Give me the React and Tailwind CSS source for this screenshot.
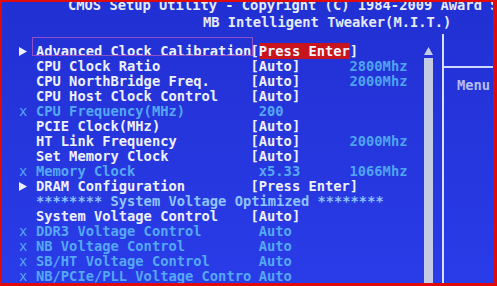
import React from "react";

const rows = [
  { mark: "arrow", label: "Advanced Clock Calibration", value: "enter", selected: true },
  { label: "CPU Clock Ratio", value: "[Auto]", extra: "2800Mhz" },
  { label: "CPU NorthBridge Freq.", value: "[Auto]", extra: "2000Mhz" },
  { label: "CPU Host Clock Control", value: "[Auto]" },
  { mark: "x", label: "CPU Frequency(MHz)", value: " 200", dim: true },
  { label: "PCIE Clock(MHz)", value: "[Auto]" },
  { label: "HT Link Frequency", value: "[Auto]", extra: "2000Mhz" },
  { label: "Set Memory Clock", value: "[Auto]" },
  { mark: "x", label: "Memory Clock", value: " x5.33", extra: "1066Mhz", dim: true },
  { mark: "arrow", label: "DRAM Configuration", value: "[Press Enter]" },
  { banner: "******** System Voltage Optimized ********" },
  { label: "System Voltage Control", value: "[Auto]" },
  { mark: "x", label: "DDR3 Voltage Control", value: " Auto", dim: true },
  { mark: "x", label: "NB Voltage Control", value: " Auto", dim: true },
  { mark: "x", label: "SB/HT Voltage Control", value: " Auto", dim: true },
  { mark: "x", label: "NB/PCIe/PLL Voltage Contro", value: " Auto", dim: true },
];

const Arrow = () => (
  <svg width="8" height="9" viewBox="0 0 8 9" className="mt-[3px]">
    <polygon points="0,0 8,4.5 0,9" fill="#eef0ff" />
  </svg>
);

const Row = ({ row }) => {
  if (row.banner) {
    return (
      <div className="flex h-[15px]">
        <span className="w-[17px]" />
        <span className="whitespace-pre text-[#8ec4ff]">{row.banner}</span>
      </div>
    );
  }
  const tone = row.dim ? "text-[#55a8f5]" : "text-[#eef0ff]";
  return (
    <div className="relative flex h-[15px]">
      {row.selected && (
        <div className="absolute left-[13px] top-[-7px] h-[19px] w-[221px] border border-[#9050c8]" />
      )}
      <span className="flex w-[17px] justify-start">
        {row.mark === "arrow" && <Arrow />}
        {row.mark === "x" && <span className="text-[#55a8f5] font-normal">x</span>}
      </span>
      <span className={`w-[214.5px] shrink-0 overflow-hidden whitespace-pre ${tone}`}>{row.label}</span>
      <span className={`w-[99px] shrink-0 whitespace-pre ${row.dim ? "text-[#55a8f5]" : "text-[#eef0ff]"}`}>
        {row.value === "enter" ? (
          <>
            [<span className="bg-[#c8141c] text-[#f4f4ff]">Press Enter</span>]
          </>
        ) : (
          row.value
        )}
      </span>
      {row.extra && <span className="whitespace-pre text-[#4ea4f2]">{row.extra}</span>}
    </div>
  );
};

export default function App() {
  return (
    <div className="h-[286px] w-[497px] overflow-hidden bg-[#e00a0a] pb-[3px] pl-[2px] pr-[4px] pt-[2px]">
      <div className="relative flex h-full flex-col overflow-hidden bg-linear-to-b from-[#2130d2] to-[#2a3ce8] font-['DejaVu_Sans_Mono',monospace] text-[13.75px] font-bold leading-[15px]">
        {/* header */}
        <div className="-mt-[4px] h-[15px] whitespace-pre pl-[66px] text-[#e6eaff]">
          CMOS Setup Utility - Copyright (C) 1984-2009 Award Software
        </div>
        <div className="mt-[2px] h-[15px] whitespace-pre pl-[201px] text-[#e6eaff]">
          MB Intelligent Tweaker(M.I.T.)
        </div>
        <div className="mt-[2px] h-[3px] bg-[#c4c8f4]" />

        {/* body */}
        <div className="flex flex-1">
          <div className="w-[422px] shrink-0 pl-[17px] pt-[12px]">
            {rows.map((row, i) => (
              <Row key={i} row={row} />
            ))}
          </div>

          {/* scrollbar */}
          <div className="flex w-[9px] shrink-0 flex-col items-center pt-[15px]">
            <svg width="9" height="8" viewBox="0 0 9 8">
              <polygon points="4.5,0 9,8 0,8" fill="#c4cce4" />
            </svg>
            <div className="mt-[3px] w-[9px] flex-1 bg-[#c4cce4]" />
          </div>

          <div className="ml-[9px] mt-[2px] w-[2px] shrink-0 bg-[#d8e0ff]" />

          {/* right panel */}
          <div className="flex-1">
            <div className="mt-[34px] h-[2px] bg-[#d0d8ff]" />
            <div className="mt-[10px] pl-[13px] text-[#b4bcf0]">Menu</div>
          </div>
        </div>
      </div>
    </div>
  );
}
